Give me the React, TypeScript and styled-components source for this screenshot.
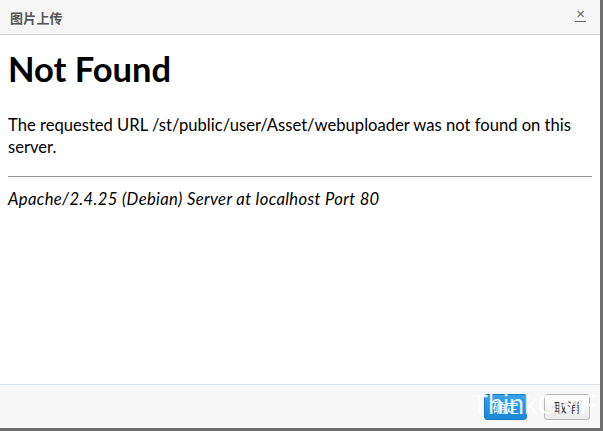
import React from "react";
import styled, { createGlobalStyle } from "styled-components";

const Global = createGlobalStyle`
  html, body { margin: 0; padding: 0; background: #fff; }
  body { width: 603px; height: 431px; overflow: hidden; }
`;

const Dialog = styled.div`
  width: 600px;
  height: 428px;
  display: flex;
  flex-direction: column;
  background: #fff;
  border-right: 3px solid #6e6e6e;
  border-bottom: 3px solid #6e6e6e;
  font-family: "Noto Sans CJK SC", "Liberation Sans", sans-serif;
`;

const Header = styled.div`
  height: 35px;
  flex: none;
  box-sizing: border-box;
  display: flex;
  align-items: center;
  justify-content: space-between;
  padding: 0 14px 0 10px;
  background: #f6f6f6;
  border-bottom: 1px solid #c8c8c8;
`;

const Title = styled.div`
  font-size: 13px;
  font-weight: bold;
  color: #545454;
  letter-spacing: 0.2px;
`;

const Close = styled.div`
  font-family: "Liberation Sans", sans-serif;
  font-size: 15px;
  line-height: 14px;
  color: #666;
  border-bottom: 1px solid #666;
  padding: 0 1px;
  margin-top: -6px;
`;

const Body = styled.div`
  flex: 1;
  padding: 0 8px;
  font-family: "Lato", "Liberation Sans", sans-serif;
  color: #000;
`;

const H1 = styled.h1`
  margin: 14px 0 0;
  font-size: 34.5px;
  font-weight: bold;
  line-height: 40px;
`;

const P = styled.p`
  margin: 25px 0 0;
  font-size: 16.6px;
  line-height: 22px;
`;

const Rule = styled.hr`
  margin: 18px 0 0;
  border: none;
  border-top: 1px solid #9a9a9a;
  height: 0;
`;

const Address = styled.address`
  margin-top: 12px;
  font-size: 16.6px;
  line-height: 21px;
  font-style: italic;
  letter-spacing: 0.35px;
`;

const Footer = styled.div`
  height: 44px;
  flex: none;
  box-sizing: border-box;
  display: flex;
  align-items: center;
  justify-content: flex-end;
  gap: 17px;
  padding: 0 10px 0 0;
  background: #f7f7f7;
  border-top: 1px solid #dde3ea;
  position: relative;
`;

const Button = styled.button<{ $primary?: boolean }>`
  height: 26px;
  padding: 0;
  font-family: "Noto Sans CJK SC", sans-serif;
  font-size: 13px;
  border-radius: 3px;
  border: 1px solid ${(p) => (p.$primary ? "#1a7bc4" : "#b8b8b8")};
  background: ${(p) =>
    p.$primary ? "linear-gradient(#36a3ea, #1b86d6)" : "linear-gradient(#fff, #eaeaea)"};
  color: ${(p) => (p.$primary ? "#fff" : "#333")};
  width: ${(p) => (p.$primary ? "43px" : "46px")};
`;

const Watermark = styled.div`
  position: absolute;
  right: 4px;
  top: 4px;
  font-family: "Liberation Sans", sans-serif;
  font-size: 27px;
  line-height: 32px;
  color: rgba(255, 255, 255, 0.85);
  pointer-events: none;
`;

export default function App() {
  return (
    <>
      <Global />
      <Dialog>
        <Header>
          <Title>图片上传</Title>
          <Close>×</Close>
        </Header>
        <Body>
          <H1>Not Found</H1>
          <P>
            The requested URL /st/public/user/Asset/webuploader was not found on this server.
          </P>
          <Rule />
          <Address>Apache/2.4.25 (Debian) Server at localhost Port 80</Address>
        </Body>
        <Footer>
          <Button $primary>确定</Button>
          <Button>取消</Button>
          <Watermark aria-hidden="true">ThinkCMF</Watermark>
        </Footer>
      </Dialog>
    </>
  );
}
